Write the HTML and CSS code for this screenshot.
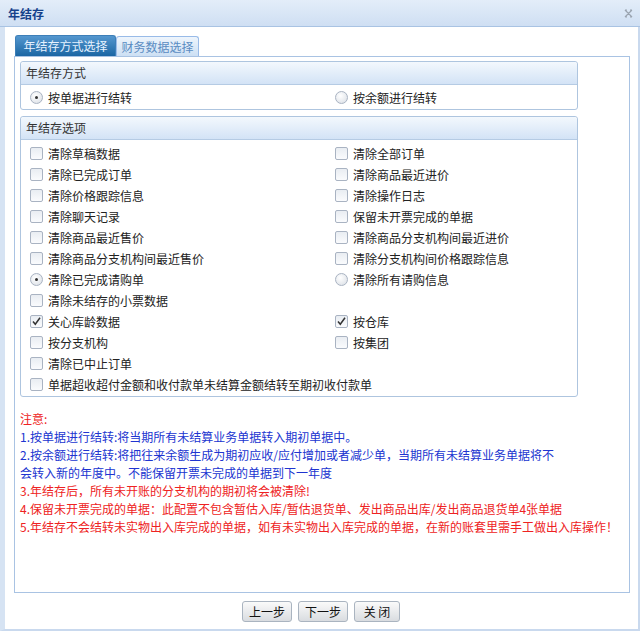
FILE: index.html
```html
<!DOCTYPE html>
<html>
<head>
<meta charset="utf-8">
<link rel="stylesheet" href="styles.css">
</head>
<body>
<div class="window">
  <div class="titlebar">
    <span class="title">年结存</span>
    <svg class="close" width="9" height="9" viewBox="0 0 9 9"><path d="M1 1L8 8M8 1L1 8M1 1h2M6 1h2M1 8h2M6 8h2" stroke="#9aa4b0" stroke-width="1.2" fill="none"/></svg>
  </div>
  <div class="main">
    <div class="tabs">
      <div class="tab active">年结存方式选择</div>
      <div class="tab">财务数据选择</div>
    </div>
    <div class="panel">
      <div class="group">
        <div class="ghead">年结存方式</div>
        <div class="grid g1">
          <label class="item"><span class="radio on"></span>按单据进行结转</label>
          <label class="item"><span class="radio"></span>按余额进行结转</label>
        </div>
      </div>
      <div class="group">
        <div class="ghead">年结存选项</div>
        <div class="grid g2">
          <label class="item"><span class="cb"></span>清除草稿数据</label>
          <label class="item"><span class="cb"></span>清除全部订单</label>
          <label class="item"><span class="cb"></span>清除已完成订单</label>
          <label class="item"><span class="cb"></span>清除商品最近进价</label>
          <label class="item"><span class="cb"></span>清除价格跟踪信息</label>
          <label class="item"><span class="cb"></span>清除操作日志</label>
          <label class="item"><span class="cb"></span>清除聊天记录</label>
          <label class="item"><span class="cb"></span>保留未开票完成的单据</label>
          <label class="item"><span class="cb"></span>清除商品最近售价</label>
          <label class="item"><span class="cb"></span>清除商品分支机构间最近进价</label>
          <label class="item"><span class="cb"></span>清除商品分支机构间最近售价</label>
          <label class="item"><span class="cb"></span>清除分支机构间价格跟踪信息</label>
          <label class="item"><span class="radio on"></span>清除已完成请购单</label>
          <label class="item"><span class="radio"></span>清除所有请购信息</label>
          <label class="item"><span class="cb"></span>清除未结存的小票数据</label>
          <span class="item"></span>
          <label class="item"><span class="cb checked"><svg width="11" height="11" viewBox="0 0 11 11"><path d="M2 5.5L4.3 8.3L9 1.8" stroke="#333" stroke-width="1.5" fill="none"/></svg></span>关心库龄数据</label>
          <label class="item"><span class="cb checked"><svg width="11" height="11" viewBox="0 0 11 11"><path d="M2 5.5L4.3 8.3L9 1.8" stroke="#333" stroke-width="1.5" fill="none"/></svg></span>按仓库</label>
          <label class="item"><span class="cb"></span>按分支机构</label>
          <label class="item"><span class="cb"></span>按集团</label>
          <label class="item"><span class="cb"></span>清除已中止订单</label>
          <span class="item"></span>
          <label class="item wide"><span class="cb"></span>单据超收超付金额和收付款单未结算金额结转至期初收付款单</label>
        </div>
      </div>
      <div class="notes">
        <div class="red">注意:</div>
        <div class="blue">1.按单据进行结转:将当期所有未结算业务单据转入期初单据中。</div>
        <div class="blue">2.按余额进行结转:将把往来余额生成为期初应收/应付增加或者减少单，当期所有未结算业务单据将不<br>会转入新的年度中。不能保留开票未完成的单据到下一年度</div>
        <div class="red">3.年结存后，所有未开账的分支机构的期初将会被清除!</div>
        <div class="red">4.保留未开票完成的单据：此配置不包含暂估入库/暂估退货单、发出商品出库/发出商品退货单4张单据</div>
        <div class="red">5.年结存不会结转未实物出入库完成的单据，如有未实物出入库完成的单据，在新的账套里需手工做出入库操作！</div>
      </div>
    </div>
    <div class="footer">
      <button class="btn">上一步</button>
      <button class="btn">下一步</button>
      <button class="btn narrow">关 闭</button>
    </div>
  </div>
</div>
</body>
</html>
```

FILE: styles.css
```css
html, body {
  margin: 0;
  padding: 0;
  background: #fff;
}
body {
  font-family: "Noto Sans CJK SC", "Liberation Sans", sans-serif;
  font-size: 12px;
  color: #222;
}
.window {
  width: 640px;
  height: 631px;
  display: flex;
  flex-direction: column;
  box-sizing: border-box;
  background: #fff;
}
.titlebar {
  height: 27px;
  box-sizing: border-box;
  background: linear-gradient(#e3edf9, #cfdff3);
  border-bottom: 1px solid #a9c3e3;
  display: flex;
  align-items: center;
  justify-content: space-between;
  padding: 0 8px 0 8px;
}
.title {
  font-weight: bold;
  color: #15428b;
  font-size: 12px;
}
.close {
  display: block;
  margin-right: -1px;
}
.main {
  flex: 1;
  display: flex;
  flex-direction: column;
  border-left: 5px solid #d6e3f3;
  border-right: 2px solid #c9d9ee;
  border-bottom: 2px solid #c9d9ee;
  padding: 8px 8px 0 9px;
  background: #fff;
}
.tabs {
  display: flex;
  height: 21px;
  align-items: flex-end;
  padding-left: 1px;
}
.tab {
  height: 21px;
  box-sizing: border-box;
  padding: 0;
  text-align: center;
  line-height: 20px;
  border: 1px solid #99bbe8;
  border-bottom: none;
  border-radius: 3px 3px 0 0;
  background: linear-gradient(#eef5fc, #cde0f4);
  color: #5a8cc2;
  font-size: 12px;
  white-space: nowrap;
}
.tab.active {
  width: 101px;
  background: linear-gradient(#5497cf, #1b66a3);
  border-color: #3d7fb8;
  color: #e6f2ff;
}
.tab + .tab {
  width: 83px;
  height: 20px;
  line-height: 19px;
}
.panel {
  flex: 1;
  border: 1px solid #a9c3e3;
  padding: 4px 5px 0 5px;
  display: flex;
  flex-direction: column;
  max-width: 616px;
  box-sizing: border-box;
}
.group {
  width: 558px;
  border: 1px solid #aec5df;
  border-radius: 3px;
  margin-bottom: 6px;
  box-sizing: border-box;
}
.ghead {
  height: 23px;
  box-sizing: border-box;
  line-height: 22px;
  padding-left: 5px;
  color: #333;
  font-size: 12px;
  background: linear-gradient(#f3f8fd, #d3e3f6);
  border-bottom: 1px solid #b5cbe4;
  border-radius: 3px 3px 0 0;
}
.grid {
  display: grid;
  grid-template-columns: 305px 1fr;
  padding-left: 9px;
}
.g1 {
  padding-top: 2px;
  padding-bottom: 1px;
}
.g2 {
  padding-top: 3px;
  padding-bottom: 1px;
}
.item {
  height: 21px;
  display: flex;
  align-items: center;
  gap: 5px;
  white-space: nowrap;
  color: #222;
}
.wide {
  grid-column: 1 / 3;
}
.cb {
  width: 13px;
  height: 13px;
  box-sizing: border-box;
  border: 1px solid #a9b3c2;
  border-radius: 2px;
  background: linear-gradient(#e9edf2, #fafbfd);
  display: flex;
  align-items: center;
  justify-content: center;
  flex: none;
}
.cb svg {
  display: block;
  margin-top: -1px;
}
.radio {
  width: 13px;
  height: 13px;
  box-sizing: border-box;
  border: 1px solid #a9b3c2;
  border-radius: 50%;
  background: radial-gradient(circle at 40% 35%, #ffffff, #d8dde4);
  flex: none;
  position: relative;
}
.radio.on::after {
  content: "";
  position: absolute;
  left: 4px;
  top: 4px;
  width: 3px;
  height: 3px;
  border-radius: 50%;
  background: #333;
}
.notes {
  margin-top: 7px;
  padding-left: 0;
  line-height: 18px;
  font-size: 12px;
  white-space: nowrap;
}
.red {
  color: #ee2222;
}
.blue {
  color: #2034d0;
}
.footer {
  height: 36px;
  display: flex;
  justify-content: center;
  align-items: center;
  gap: 6px;
  padding-bottom: 0;
  padding-right: 2px;
}
.btn {
  width: 50px;
  height: 21px;
  padding: 0;
  font-family: "Noto Sans CJK SC", "Liberation Sans", sans-serif;
  font-size: 12px;
  color: #111;
  border: 1px solid #aab4c0;
  border-radius: 3px;
  background: linear-gradient(#fafafa, #d9dce0);
  margin-top: 1px;
}
.btn.narrow {
  width: 46px;
}
```
